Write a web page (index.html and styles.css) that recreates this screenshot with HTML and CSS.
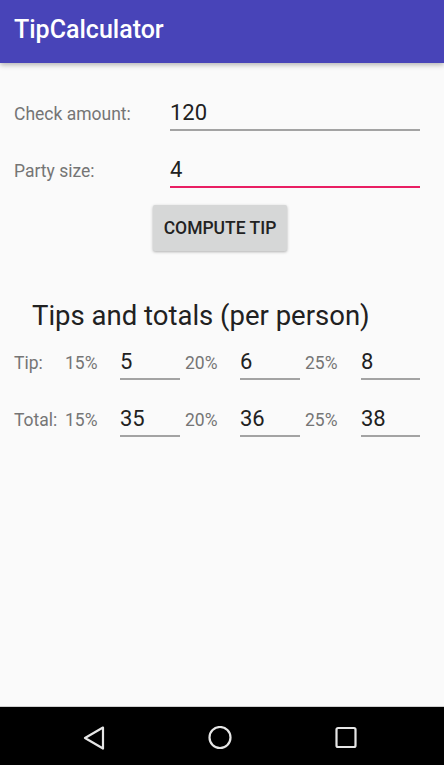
FILE: index.html
```html
<!DOCTYPE html>
<html lang="en">
<head>
<meta charset="utf-8">
<title>TipCalculator</title>
<link rel="stylesheet" href="styles.css">
</head>
<body>
<div class="screen">
  <header class="appbar"><h1 class="title">TipCalculator</h1></header>
  <main class="content">
    <div class="form-row first">
      <span class="label">Check amount:</span>
      <span class="field">120</span>
    </div>
    <div class="form-row">
      <span class="label">Party size:</span>
      <span class="field focused">4</span>
    </div>
    <div class="btn-wrap"><button class="btn">COMPUTE TIP</button></div>
    <h2 class="heading">Tips and totals (per person)</h2>
    <div class="tip-row first-tip">
      <span class="label">Tip:</span>
      <span class="label">15%</span><span class="field">5</span>
      <span class="label">20%</span><span class="field">6</span>
      <span class="label">25%</span><span class="field">8</span>
    </div>
    <div class="tip-row">
      <span class="label">Total:</span>
      <span class="label">15%</span><span class="field">35</span>
      <span class="label">20%</span><span class="field">36</span>
      <span class="label">25%</span><span class="field">38</span>
    </div>
  </main>
  <nav class="navbar">
    <svg class="nav-icon" width="24" height="24" viewBox="0 0 24 24"><path d="M21 1.5 L3 12 L21 22.5 Z" fill="none" stroke="#e6e6e6" stroke-width="2.2" stroke-linejoin="round"/></svg>
    <svg class="nav-icon" width="24" height="24" viewBox="0 0 24 24"><circle cx="12" cy="11.5" r="10.5" fill="none" stroke="#e6e6e6" stroke-width="2.2"/></svg>
    <svg class="nav-icon" width="24" height="24" viewBox="0 0 24 24"><rect x="2.5" y="2" width="19" height="19" rx="1.5" fill="none" stroke="#e6e6e6" stroke-width="2.2"/></svg>
  </nav>
</div>
</body>
</html>
```
FILE: styles.css
```css
* { box-sizing: border-box; }
html, body { margin: 0; padding: 0; }
body {
  font-family: Roboto, "Noto Sans", sans-serif;
  background: #fafafa;
}
.screen {
  width: 444px;
  height: 765px;
  display: flex;
  flex-direction: column;
  overflow: hidden;
}
.appbar {
  position: relative;
  z-index: 2;
  height: 63px;
  flex: 0 0 63px;
  background: #4844b8;
  display: flex;
  align-items: center;
  padding-left: 14px;
  box-shadow: 0 2px 5px rgba(0,0,0,0.28);
}
.title {
  margin: 0 0 4px 0;
  font-size: 25px;
  font-weight: 500;
  color: #ffffff;
}
.content {
  flex: 1;
  background: #fafafa;
}
.form-row {
  display: grid;
  grid-template-columns: 156px 250px;
  padding-left: 14px;
  align-items: baseline;
  margin-top: 26px;
}
.form-row.first { margin-top: 37px; }
.label {
  font-size: 17.5px;
  color: #757575;
  line-height: 26px;
}
.field {
  font-size: 22px;
  line-height: 26px;
  color: #212121;
  padding-bottom: 3px;
  border-bottom: 2px solid #a3a3a3;
}
.field.focused { border-bottom-color: #e91e63; }
.btn-wrap {
  display: flex;
  justify-content: center;
  padding-right: 4px;
  margin-top: 17px;
}
.btn {
  width: 134px;
  height: 46px;
  border: none;
  border-radius: 2px;
  background: #d6d7d7;
  color: #222222;
  font-family: Roboto, "Noto Sans", sans-serif;
  font-size: 17.5px;
  font-weight: 500;
  padding: 0;
  box-shadow: 0 1px 3px rgba(0,0,0,0.3);
}
.heading {
  margin: 48px 0 0 32px;
  font-size: 27.5px;
  font-weight: 400;
  line-height: 34px;
  color: #212121;
}
.tip-row {
  display: grid;
  grid-template-columns: 51px 55px 60px 60px 60px 61px 59px;
  padding-left: 14px;
  align-items: baseline;
  margin-top: 26px;
}
.tip-row.first-tip { margin-top: 16px; }
.tip-row .field + .label { padding-left: 5px; }
.navbar {
  flex: 0 0 59px;
  height: 59px;
  background: #000;
  border-top: 1px solid #cfcfcf;
  display: flex;
  gap: 102px;
  padding: 19px 0 0 82px;
}
.nav-icon { display: block; }
```
